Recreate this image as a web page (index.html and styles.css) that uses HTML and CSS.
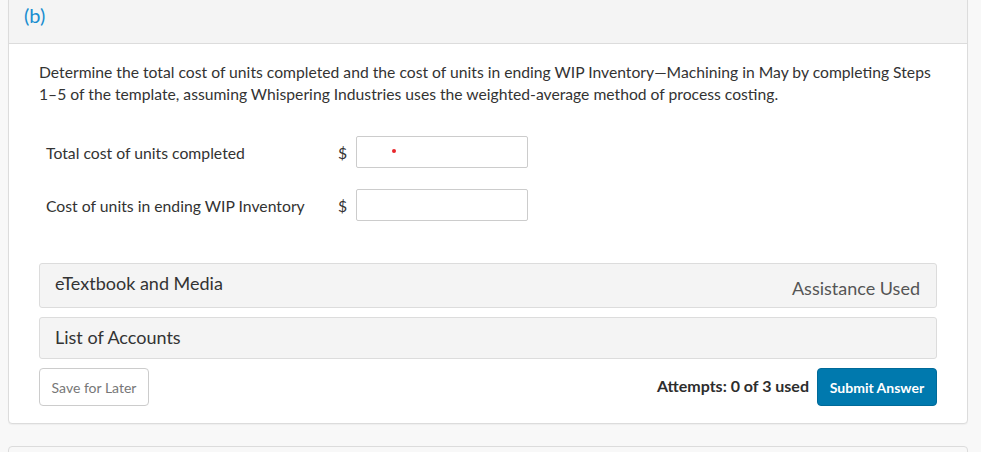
FILE: index.html
```html
<!DOCTYPE html>
<html>
<head>
<meta charset="utf-8">
<link rel="stylesheet" href="styles.css">
</head>
<body>
<div class="page">
  <div class="card">
    <div class="card-head">(b)</div>
    <div class="card-body">
      <p class="prompt">Determine the total cost of units completed and the cost of units in ending WIP Inventory—Machining in May by completing Steps 1–5 of the template, assuming Whispering Industries uses the weighted-average method of process costing.</p>
      <div class="rows">
        <div class="row">
          <span class="label">Total cost of units completed</span>
          <span class="cur">$</span>
          <span class="input"><span class="dot"></span></span>
        </div>
        <div class="row">
          <span class="label">Cost of units in ending WIP Inventory</span>
          <span class="cur">$</span>
          <span class="input"></span>
        </div>
      </div>
      <div class="panel panel-first">
        <span class="panel-title">eTextbook and Media</span>
        <span class="panel-aside">Assistance Used</span>
      </div>
      <div class="panel panel-second">
        <span class="panel-title">List of Accounts</span>
      </div>
      <div class="actions">
        <button class="btn-save">Save for Later</button>
        <div class="actions-right">
          <span class="attempts">Attempts: 0 of 3 used</span>
          <button class="btn-submit">Submit Answer</button>
        </div>
      </div>
    </div>
  </div>
  <div class="card next"></div>
</div>
</body>
</html>
```
FILE: styles.css
```css
html, body {
  margin: 0;
  padding: 0;
  background: #f8f8f8;
  font-family: Lato, "Open Sans", sans-serif;
  color: #2d2d2d;
}
.page {
  padding: 0 13px 0 8px;
}
.card {
  background: #fff;
  border: 1px solid #dcdcdc;
  border-radius: 4px;
  margin-top: -4px;
  box-shadow: 0 1px 1px rgba(0,0,0,0.04);
}
.card-head {
  background: #f4f4f4;
  border-bottom: 1px solid #dcdcdc;
  box-sizing: border-box;
  height: 47px;
  padding: 6px 0 0 15px;
  font-size: 20px;
  line-height: 24px;
  color: #1a8ed0;
  border-radius: 4px 4px 0 0;
}
.card-body {
  padding: 0 30px 17px 30px;
}
.prompt {
  margin: 17px 0 0 0;
  font-size: 15.7px;
  line-height: 22px;
  color: #333;
}
.rows {
  margin-top: 31px;
  padding-left: 7px;
  display: flex;
  flex-direction: column;
  gap: 21px;
}
.row {
  display: flex;
  align-items: center;
  height: 32px;
}
.label {
  width: 292px;
  font-size: 15.75px;
  color: #333;
}
.cur {
  width: 18px;
  font-size: 15.75px;
  color: #333;
}
.input {
  width: 170px;
  height: 30px;
  border: 1px solid #ccc;
  border-radius: 2px;
  position: relative;
  background: #fff;
}
.dot {
  position: absolute;
  left: 35px;
  top: 12px;
  width: 4px;
  height: 4px;
  border-radius: 50%;
  background: #e8262b;
}
.panel {
  background: #f4f4f4;
  border: 1px solid #dcdcdc;
  border-radius: 3px;
  display: flex;
  align-items: center;
  justify-content: space-between;
  padding: 0 16px 0 15px;
  box-sizing: border-box;
  font-size: 18px;
  color: #333;
}
.panel-first {
  margin-top: 42px;
  height: 45px;
  padding-bottom: 5px;
}
.panel-aside {
  color: #555;
  padding-top: 9px;
}
.panel-second {
  margin-top: 9px;
  height: 42px;
  padding-bottom: 2px;
}
.actions {
  margin-top: 9px;
  display: flex;
  justify-content: space-between;
  align-items: center;
}
.actions-right {
  display: flex;
  align-items: center;
  gap: 8px;
}
.btn-save {
  font-family: Lato, sans-serif;
  width: 110px;
  height: 38px;
  background: #fff;
  border: 1px solid #ccc;
  border-radius: 4px;
  font-size: 14px;
  color: #777;
  padding: 0;
}
.attempts {
  font-size: 16px;
  font-weight: 700;
  color: #2d2d2d;
  margin-top: -4px;
}
.btn-submit {
  font-family: Lato, sans-serif;
  width: 120px;
  height: 38px;
  background: #0079ae;
  border: 1px solid #006a99;
  border-radius: 4px;
  color: #fff;
  font-size: 14px;
  font-weight: 700;
  padding: 0;
}
.next {
  margin-top: 22px;
  height: 40px;
  background: #f8f8f8;
  border-radius: 4px 4px 0 0;
}
```
